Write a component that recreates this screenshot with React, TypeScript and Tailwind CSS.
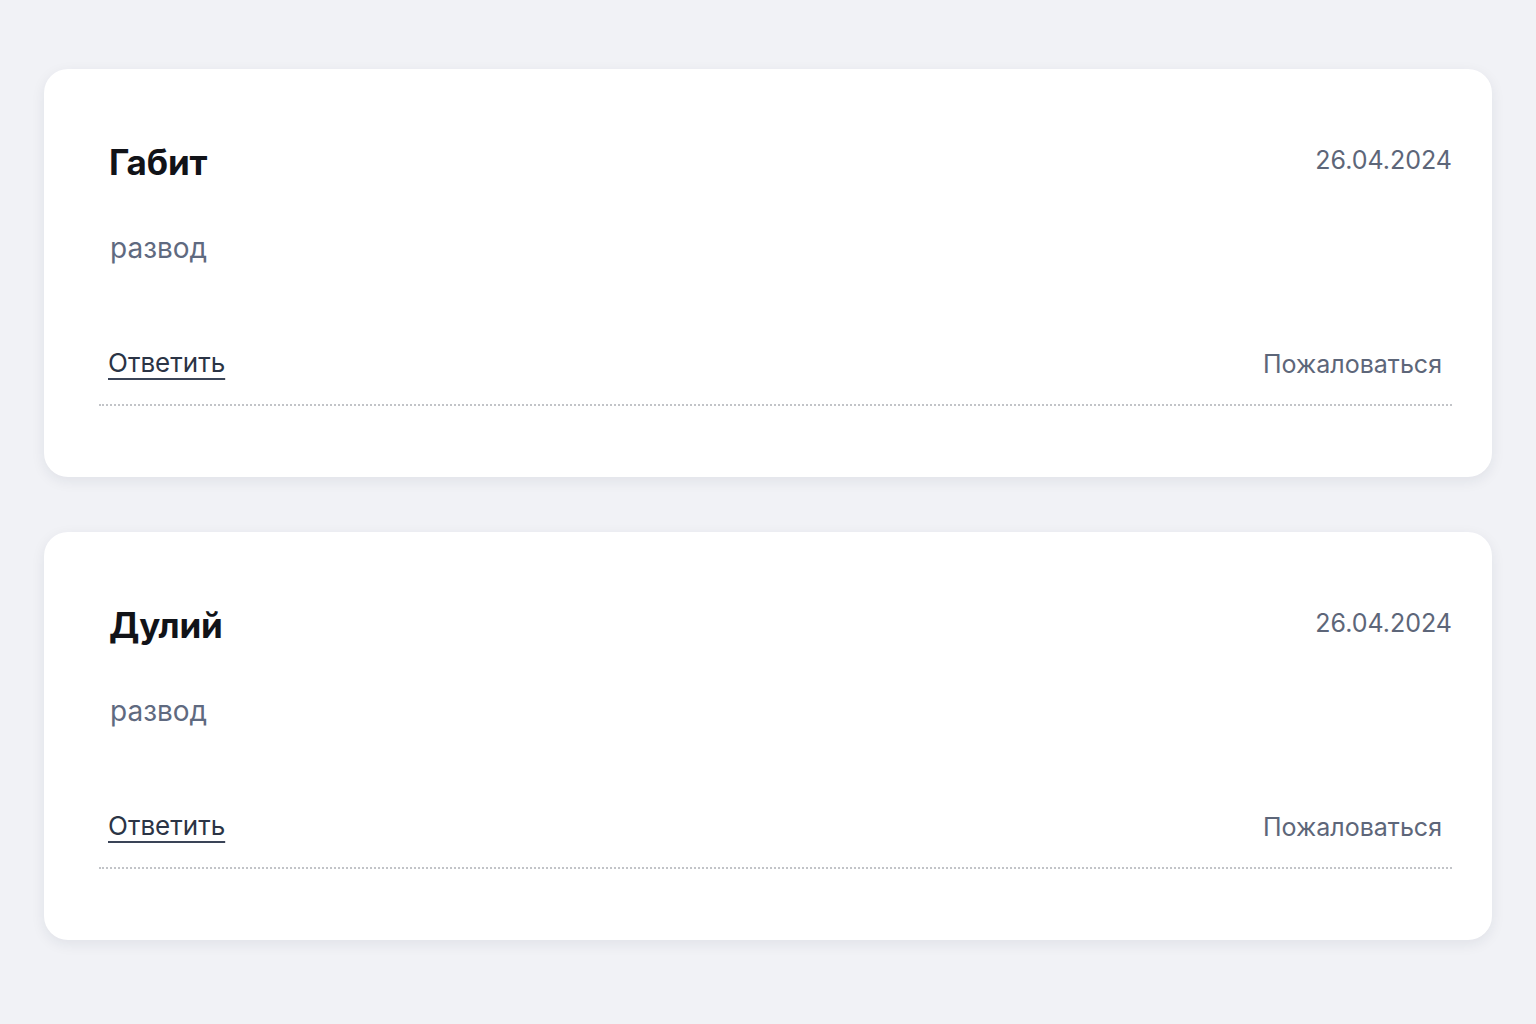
const reviews = [
  { name: "Габит", date: "26.04.2024", text: "развод" },
  { name: "Дулий", date: "26.04.2024", text: "развод" },
];

const ReviewCard = ({ name, date, text }: { name: string; date: string; text: string }) => {
  return (
    <div className="bg-white rounded-[24px] shadow-[0_4px_14px_rgba(30,40,70,0.08)] pl-[55px] pr-[40px] pt-[72px] pb-[71px]">
      <div className="flex justify-between items-start pl-[10px]">
        <h3 className="text-[35px] leading-[42px] font-bold text-[#111318] tracking-[-0.2px]">{name}</h3>
        <span className="text-[25px] leading-[32px] text-[#5d6679] mt-[3px]">{date}</span>
      </div>
      <p className="pl-[11px] mt-[47px] text-[28px] leading-[36px] text-[#5f6a80]">{text}</p>
      <div className="flex justify-between items-center pl-[9px] pr-[10px] mt-[80px]">
        <a href="#" className="text-[26px] leading-[32px] text-[#2b3445] underline decoration-[2px] underline-offset-[6px] decoration-[#3a4457]">
          Ответить
        </a>
        <span className="text-[25px] leading-[32px] text-[#5d6679] mt-[2px]">Пожаловаться</span>
      </div>
      <div className="mt-[24px] border-t-[2px] border-dotted border-[#c2c4c8]" />
    </div>
  );
};

export default function App() {
  return (
    <div className="min-h-screen bg-[#f1f2f6] px-[44px] pt-[69px] pb-[84px] font-['Inter','Noto_Sans',sans-serif]">
      <div className="flex flex-col gap-[55px]">
        {reviews.map((r, i) => (
          <ReviewCard key={i} {...r} />
        ))}
      </div>
    </div>
  );
}
